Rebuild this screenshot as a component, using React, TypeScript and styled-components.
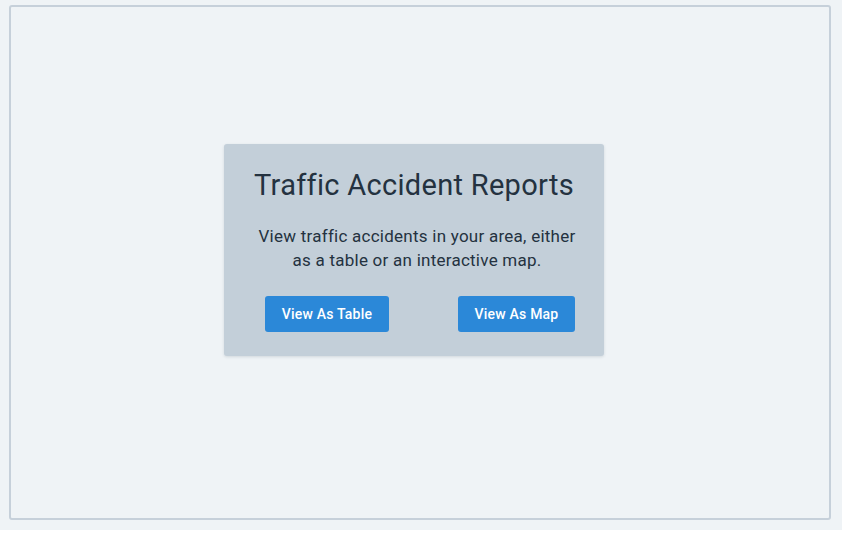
import React from "react";
import styled, {createGlobalStyle} from "styled-components";

const GlobalStyle = createGlobalStyle`
	html, body {
		margin: 0;
		padding: 0;
		background: #ffffff;
	}
	body {
		font-family: Roboto, "Noto Sans", sans-serif;
	}
`;

const StyledPage = styled.div`
	width: 842px;
	height: 530px;
	box-sizing: border-box;
	padding: 5px 11px 10px 9px;
	background: #eff3f6;
`;

const StyledFrame = styled.div`
	height: 100%;
	box-sizing: border-box;
	border: 2px solid #c6d0da;
	border-radius: 3px;
	display: flex;
	align-items: center;
	justify-content: center;
	padding: 0 12px 26px 0;
`;

const StyledCard = styled.div`
	width: 380px;
	height: 212px;
	box-sizing: border-box;
	background: #c3cfd9;
	border-radius: 3px;
	box-shadow: 0 1px 3px rgba(40, 60, 80, 0.15);
	display: flex;
	flex-direction: column;
	align-items: center;
	padding-top: 23px;
	color: #243240;
`;

const StyledTitle = styled.h1`
	margin: 0;
	font-size: 29px;
	font-weight: 400;
	letter-spacing: 0.3px;
	line-height: 36px;
`;

const StyledText = styled.p`
	margin: 21px 0 0 6px;
	width: 330px;
	text-align: center;
	font-size: 17px;
	letter-spacing: 0.25px;
	line-height: 24px;
`;

const StyledButtonRow = styled.div`
	width: 310px;
	margin: 24px 0 0 12px;
	display: flex;
	justify-content: space-between;
`;

const StyledButton = styled.button<{ $width: number }>`
	width: ${p => p.$width}px;
	height: 36px;
	border: none;
	border-radius: 3px;
	background: #2b88d8;
	color: #ffffff;
	font-family: inherit;
	font-size: 14px;
	font-weight: 500;
	letter-spacing: 0.2px;
	cursor: pointer;
`;

const App = () => {
	return <>
		<GlobalStyle/>
		<StyledPage>
			<StyledFrame>
				<StyledCard>
					<StyledTitle>Traffic Accident Reports</StyledTitle>
					<StyledText>View traffic accidents in your area, either as a table or an interactive map.</StyledText>
					<StyledButtonRow>
						<StyledButton $width={124}>View As Table</StyledButton>
						<StyledButton $width={117}>View As Map</StyledButton>
					</StyledButtonRow>
				</StyledCard>
			</StyledFrame>
		</StyledPage>
	</>;
}

export default App;
